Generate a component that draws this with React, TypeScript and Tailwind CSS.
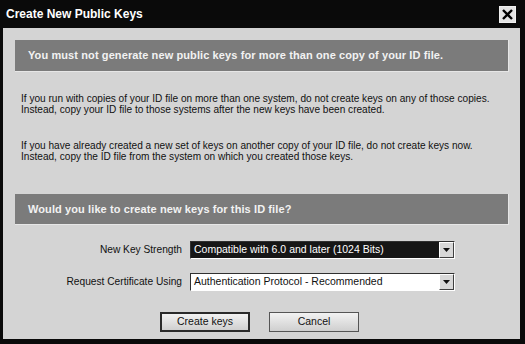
import { useState } from "react";

function DropArrow() {
  return (
    <div className="flex h-full w-[15px] items-center justify-center border border-t-white border-l-white border-r-[#404040] border-b-[#404040] bg-[#d8d8d8]">
      <svg width="7" height="4" viewBox="0 0 7 4">
        <path d="M0 0 L7 0 L3.5 4 Z" fill="#111" />
      </svg>
    </div>
  );
}

type SelectProps = {
  label: string;
  value: string;
  active?: boolean;
};

function SelectRow({ label, value, active }: SelectProps) {
  return (
    <div className="flex items-center">
      <span className="w-[175px] pr-[8px] text-right text-[10.2px] text-[#111]">{label}</span>
      <div className="flex h-[18px] w-[265px] items-stretch border border-t-[#303030] border-l-[#303030] border-r-white border-b-white bg-white">
        <div
          className={
            active
              ? "flex flex-1 items-center bg-[#161616] pl-[3px] text-[10.5px] text-white"
              : "flex flex-1 items-center bg-white pl-[3px] text-[10.5px] text-[#111]"
          }
        >
          {value}
        </div>
        <DropArrow />
      </div>
    </div>
  );
}

export default function App() {
  const [closed, setClosed] = useState(false);

  return (
    <div className="flex h-[344px] w-[525px] flex-col bg-[#0a0a0a] font-['Liberation_Sans',Arial,sans-serif]">
      <div className="flex h-[28px] items-center justify-between pl-[6px] pr-[9px]">
        <span className="text-[12px] font-bold text-white">Create New Public Keys</span>
        <button
          className="flex h-[17px] w-[17px] items-center justify-center border border-[#f0f0f0] bg-[#e4e4e4]"
          onClick={() => setClosed(!closed)}
          type="button"
        >
          <svg width="11" height="11" viewBox="0 0 11 11">
            <path d="M1 1 L10 10 M10 1 L1 10" stroke="#000" strokeWidth="2.4" />
          </svg>
        </button>
      </div>

      <div className="mb-[5px] ml-[3px] mr-[5px] flex flex-1 flex-col bg-[#d4d4d4] pl-[12px] pr-[11px]">
        <div className="mt-[12px] flex h-[32px] items-center border-b border-r border-[#e6e6e6] bg-[#7b7b7b] pl-[13px] text-[11px] font-bold tracking-[0.1px] text-[#f2f2f2]">
          You must not generate new public keys for more than one copy of your ID file.
        </div>

        <p className="mt-[21px] pl-[6px] text-[10.1px] leading-[11px] text-[#111]">
          If you run with copies of your ID file on more than one system, do not create keys on any of those copies.
          <br />
          Instead, copy your ID file to those systems after the new keys have been created.
        </p>

        <p className="mt-[25px] pl-[6px] text-[10.1px] leading-[11px] text-[#111]">
          If you have already created a new set of keys on another copy of your ID file, do not create keys now.
          <br />
          Instead, copy the ID file from the system on which you created those keys.
        </p>

        <div className="mt-[32px] flex h-[31px] items-center border-b border-r border-[#e6e6e6] bg-[#7b7b7b] pl-[13px] text-[11px] font-bold tracking-[0.1px] text-[#f2f2f2]">
          Would you like to create new keys for this ID file?
        </div>

        <div className="mt-[16px]">
          <SelectRow label="New Key Strength" value="Compatible with 6.0 and later (1024 Bits)" active />
        </div>
        <div className="mt-[14px]">
          <SelectRow label="Request Certificate Using" value="Authentication Protocol - Recommended" />
        </div>

        <div className="mt-[21px] flex gap-[19px] pl-[145px]">
          <button
            className="h-[20px] w-[90px] border-2 border-[#2a2a2a] bg-gradient-to-b from-[#f2f2f2] to-[#cfcfcf] text-[10.5px] text-[#111]"
            type="button"
          >
            Create keys
          </button>
          <button
            className="h-[20px] w-[90px] border border-[#555] bg-gradient-to-b from-[#f2f2f2] to-[#cfcfcf] text-[10.5px] text-[#111]"
            type="button"
          >
            Cancel
          </button>
        </div>
      </div>
    </div>
  );
}
